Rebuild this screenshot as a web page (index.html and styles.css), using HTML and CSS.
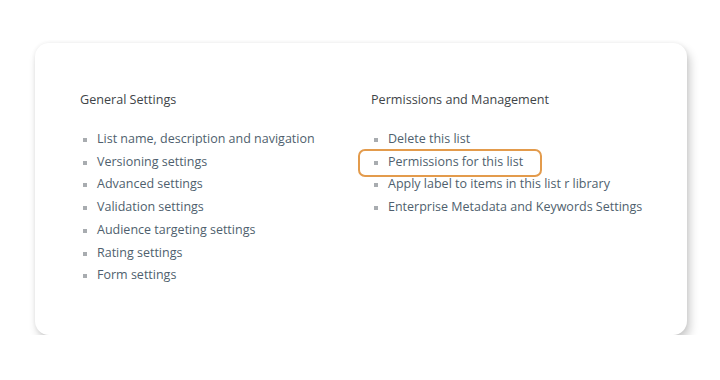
FILE: index.html
```html
<!DOCTYPE html>
<html lang="en">
<head>
  <meta charset="UTF-8" />
  <title>List Settings</title>
  <link rel="stylesheet" href="styles.css">
</head>
<body>
  <div class="card">
    <div class="column general">
      <h2>General Settings</h2>
      <ul>
        <li>List name, description and navigation</li>
        <li>Versioning settings</li>
        <li>Advanced settings</li>
        <li>Validation settings</li>
        <li>Audience targeting settings</li>
        <li>Rating settings</li>
        <li>Form settings</li>
      </ul>
    </div>
    <div class="column perms">
      <h2>Permissions and Management</h2>
      <ul>
        <li>Delete this list</li>
        <li class="highlight">Permissions for this list</li>
        <li>Apply label to items in this list r library</li>
        <li>Enterprise Metadata and Keywords Settings</li>
      </ul>
    </div>
  </div>
</body>
</html>
```

FILE: styles.css
```css
body {
  margin: 0;
  background-color: #fff;
  font-family: "Open Sans", "Noto Sans", sans-serif;
  padding: 43px 33px 0 35px;
}
.card {
  width: 652px;
  height: 292px;
  box-sizing: border-box;
  background-color: #fff;
  border-radius: 14px;
  box-shadow: 3px 6px 10px rgba(0, 0, 0, 0.2), 0 0 4px rgba(0, 0, 0, 0.07);
  display: flex;
  padding: 48px 0 0 45px;
}
.column.general {
  width: 291px;
}
h2 {
  font-size: 12.6px;
  font-weight: normal;
  color: #404448;
  margin: 0 0 19px;
  line-height: 18px;
}
ul {
  list-style: none;
  margin: 0;
  padding: 0;
}
li {
  position: relative;
  font-size: 12.5px;
  color: #4f5f6e;
  line-height: 22.7px;
  padding-left: 17px;
}
li::before {
  content: "";
  position: absolute;
  left: 3px;
  top: 10px;
  width: 4px;
  height: 4px;
  background-color: #a8acb0;
}
.highlight::after {
  content: "";
  position: absolute;
  left: -13px;
  top: -2px;
  width: 184px;
  height: 28px;
  box-sizing: border-box;
  border: 2px solid #e39b4c;
  border-radius: 7px;
}
```
